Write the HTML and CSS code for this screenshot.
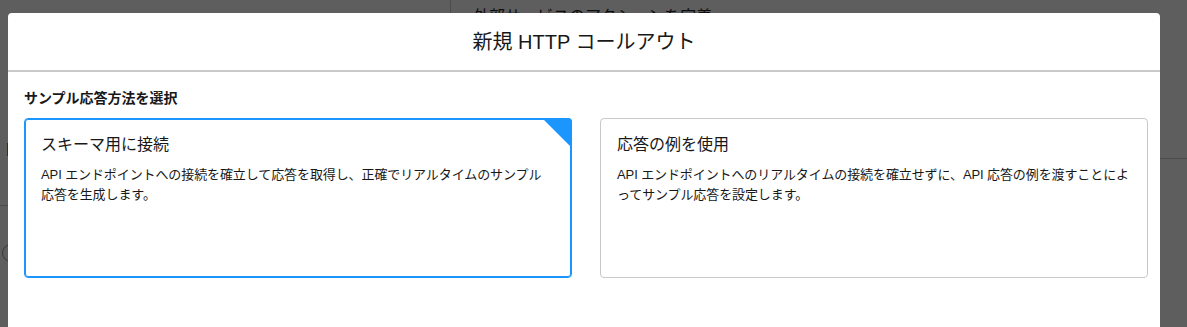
FILE: index.html
```html
<!DOCTYPE html>
<html lang="ja">
<head>
    <meta charset="UTF-8">
    <meta name="viewport" content="width=device-width, initial-scale=1.0">
    <title>新規 HTTP コールアウト</title>
    <link rel="stylesheet" href="styles.css">
</head>
<body>
    <div class="page">
        <aside class="sidebar">
            <div class="side-head"></div>
            <div class="side-item">ト</div>
            <div class="side-rule"></div>
            <div class="side-radio"><span class="radio"></span></div>
        </aside>
        <main class="main">
            <div class="main-head">外部サービスのアクションを定義</div>
            <div class="main-rule"></div>
        </main>
    </div>

    <div class="backdrop"></div>

    <section class="modal">
        <header class="modal-header">
            <h2>新規 HTTP コールアウト</h2>
        </header>
        <div class="modal-body">
            <div class="group-label">サンプル応答方法を選択</div>
            <div class="options">
                <div class="option selected">
                    <h3>スキーマ用に接続</h3>
                    <p>API エンドポイントへの接続を確立して応答を取得し、正確でリアルタイムのサンプル<br>応答を生成します。</p>
                </div>
                <div class="option">
                    <h3>応答の例を使用</h3>
                    <p>API エンドポイントへのリアルタイムの接続を確立せずに、API 応答の例を渡すことによ<br>ってサンプル応答を設定します。</p>
                </div>
            </div>
        </div>
    </section>
</body>
</html>
```

FILE: styles.css
```css
body {
    margin: 0;
    font-family: "Liberation Sans", "Noto Sans CJK JP", sans-serif;
    color: #181818;
    background: #fff;
    overflow: hidden;
}
.page {
    display: flex;
    height: 327px;
}
.sidebar {
    width: 450px;
    border-right: 1px solid #c9c9c9;
}
.side-head {
    height: 138px;
}
.side-item {
    padding-left: 2px;
    font-size: 16px;
    line-height: 24px;
}
.side-rule {
    margin-top: 43px;
    border-top: 1px solid #c9c9c9;
}
.side-radio {
    display: flex;
    align-items: center;
    margin-top: 38px;
    padding-left: 2px;
}
.radio {
    width: 16px;
    height: 16px;
    border: 1px solid #939393;
    border-radius: 50%;
}
.main {
    flex: 1;
}
.main-head {
    padding: 7px 0 0 22px;
    font-size: 16px;
    line-height: 20px;
}
.main-rule {
    margin-top: 131px;
    border-top: 1px solid #c9c9c9;
}
.backdrop {
    position: fixed;
    inset: 0;
    background: rgba(8, 8, 8, 0.65);
}
.modal {
    position: fixed;
    top: 13px;
    left: 8px;
    width: 1152px;
    height: 400px;
    background: #fff;
    border-radius: 4px 4px 0 0;
}
.modal-header {
    display: flex;
    align-items: center;
    justify-content: center;
    height: 57px;
    border-bottom: 2px solid #c9c9c9;
}
.modal-header h2 {
    margin: 0;
    font-size: 20px;
    font-weight: normal;
    line-height: 28px;
}
.modal-body {
    padding: 16px 12px 0 16px;
}
.group-label {
    font-size: 14px;
    font-weight: bold;
    line-height: 20px;
    margin-bottom: 10px;
}
.options {
    display: grid;
    grid-template-columns: 1fr 1fr;
    gap: 28px;
}
.option {
    position: relative;
    box-sizing: border-box;
    height: 160px;
    padding: 14px 16px;
    border: 1px solid #c9c9c9;
    border-radius: 4px;
}
.option.selected {
    border-color: #1b96ff;
    box-shadow: inset 0 0 0 1px #1b96ff;
}
.option.selected::after {
    content: "";
    position: absolute;
    top: -1px;
    right: -1px;
    border-top: 30px solid #1b96ff;
    border-left: 30px solid transparent;
    border-top-right-radius: 4px;
}
.option h3 {
    margin: 0;
    font-size: 16px;
    font-weight: normal;
    line-height: 24px;
}
.option p {
    margin: 8px 0 0;
    font-size: 13px;
    line-height: 20px;
    letter-spacing: -0.1px;
}
```
